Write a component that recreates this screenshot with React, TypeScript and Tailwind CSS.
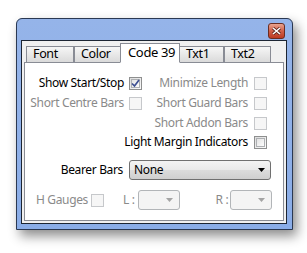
import React from "react";

const font = "font-['Noto_Sans',sans-serif]";

const Check = ({ checked = false, disabled = false }: { checked?: boolean; disabled?: boolean }) => (
  <div
    className={`w-[13px] h-[13px] shrink-0 border ${
      disabled ? "border-[#c6c8cb] bg-[#f6f6f6]" : "border-[#8e8f8f] bg-[linear-gradient(135deg,#dcdcdc,#fbfbfb)]"
    } flex items-center justify-center`}
  >
    {!disabled && (
      <div className="w-[9px] h-[9px] border border-[#aeb0b3] bg-[linear-gradient(135deg,#e3e3e3,#fdfdfd)] flex items-center justify-center">
        {checked && (
          <svg width="11" height="11" viewBox="0 0 11 11" className="-m-[2px]">
            <path d="M2 5.5 L4.5 8 L9 2" fill="none" stroke="#3d4f92" strokeWidth="1.7" />
          </svg>
        )}
      </div>
    )}
  </div>
);

const Arrow = ({ color }: { color: string }) => (
  <svg width="7" height="4" viewBox="0 0 7 4">
    <path d="M0 0 H7 L3.5 4 Z" fill={color} />
  </svg>
);

const Tab = ({ label, w, active = false }: { label: string; w: string; active?: boolean }) => (
  <div
    className={`${w} flex items-center border border-[#898c95] whitespace-nowrap ${
      active
        ? "h-[20px] bg-white border-b-white text-[13px] pl-[7px] -mx-[1px] z-10 relative"
        : "h-[17px] bg-[linear-gradient(#f6f6f6,#dadada)] pl-[6px] text-[12.5px] self-end"
    }`}
  >
    {label}
  </div>
);

export default function App() {
  return (
    <div className={`w-[307px] h-[253px] bg-white pt-[18px] pl-[16px] text-black tracking-[-0.35px] ${font}`}>
      <div className="w-[277px] h-[212px] border border-[#2a3852] rounded-t-[6px] bg-[#8dafe8] bg-[linear-gradient(#95b4e9,#8aade8)] shadow-[4px_6px_12px_rgba(0,0,0,0.45)] flex flex-col pl-[4px] pr-[5px] pb-[5px]">
        <div className="h-[21px] flex justify-end items-start pt-[4px] pr-[2px]">
          <div className="w-[17px] h-[16px] rounded-[3px] border border-[#6b2d22] bg-[linear-gradient(#e9a48f,#d0604a_50%,#bd3a22)] flex items-center justify-center">
            <svg width="9" height="8" viewBox="0 0 9 8">
              <path d="M1 1 L8 7 M8 1 L1 7" stroke="#5a2018" strokeWidth="3" />
              <path d="M1 1 L8 7 M8 1 L1 7" stroke="#ffffff" strokeWidth="1.6" />
            </svg>
          </div>
        </div>
        <div className="flex-1 border border-[#1c2533] bg-[#f0f0f0] p-[2px] flex flex-col">
          <div className="flex h-[20px] pl-[2px] -mb-px items-end">
            <Tab label="Font" w="w-[48px]" />
            <Tab label="Color" w="w-[47px]" />
            <Tab label="Code 39" w="w-[60px]" active />
            <Tab label="Txt1" w="w-[45px]" />
            <Tab label="Txt2" w="w-[47px]" />
          </div>
          <div className="flex-1 border border-[#898c95] bg-white flex flex-col text-[12px] pt-[13px] whitespace-nowrap">
            <div className="flex h-[14px] items-center">
              <div className="w-[117px] flex justify-end items-center gap-[5px]">
                <span>Show Start/Stop</span>
                <Check checked />
              </div>
              <div className="w-[125px] flex justify-end items-center gap-[6px] text-[#8a8a8a]">
                <span>Minimize Length</span>
                <Check disabled />
              </div>
            </div>
            <div className="flex h-[14px] items-center mt-[6px]">
              <div className="w-[117px] flex justify-end items-center gap-[5px] text-[#8a8a8a]">
                <span>Short Centre Bars</span>
                <Check disabled />
              </div>
              <div className="w-[125px] flex justify-end items-center gap-[6px] text-[#8a8a8a]">
                <span>Short Guard Bars</span>
                <Check disabled />
              </div>
            </div>
            <div className="flex h-[14px] items-center mt-[6px]">
              <div className="w-[242px] flex justify-end items-center gap-[6px] text-[#8a8a8a]">
                <span>Short Addon Bars</span>
                <Check disabled />
              </div>
            </div>
            <div className="flex h-[14px] items-center mt-[5px]">
              <div className="w-[242px] flex justify-end items-center gap-[6px]">
                <span>Light Margin Indicators</span>
                <Check />
              </div>
            </div>
            <div className="flex h-[20px] items-center mt-[11px]">
              <div className="w-[104px] text-right pr-[6px]">Bearer Bars</div>
              <div className="w-[142px] h-[20px] rounded-[3px] border border-[#707070] bg-[linear-gradient(#f3f3f3,#e9e9e9_48%,#dcdcdc_52%,#cfcfcf)] flex items-center justify-between pl-[4px] pr-[5px]">
                <span>None</span>
                <Arrow color="#000000" />
              </div>
            </div>
            <div className="flex h-[20px] items-center mt-[10px] text-[#8a8a8a]">
              <span className="ml-[11px]">H Gauges</span>
              <div className="ml-[3px]">
                <Check disabled />
              </div>
              <span className="ml-[19px]">L :</span>
              <div className="ml-[3px] w-[42px] h-[20px] rounded-[3px] border border-[#b2b5b8] bg-[#f4f4f4] flex items-center justify-end pr-[6px]">
                <Arrow color="#a4a4a4" />
              </div>
              <span className="ml-[36px]">R :</span>
              <div className="ml-[2px] w-[42px] h-[20px] rounded-[3px] border border-[#b2b5b8] bg-[#f4f4f4] flex items-center justify-end pr-[6px]">
                <Arrow color="#a4a4a4" />
              </div>
            </div>
          </div>
        </div>
      </div>
    </div>
  );
}
